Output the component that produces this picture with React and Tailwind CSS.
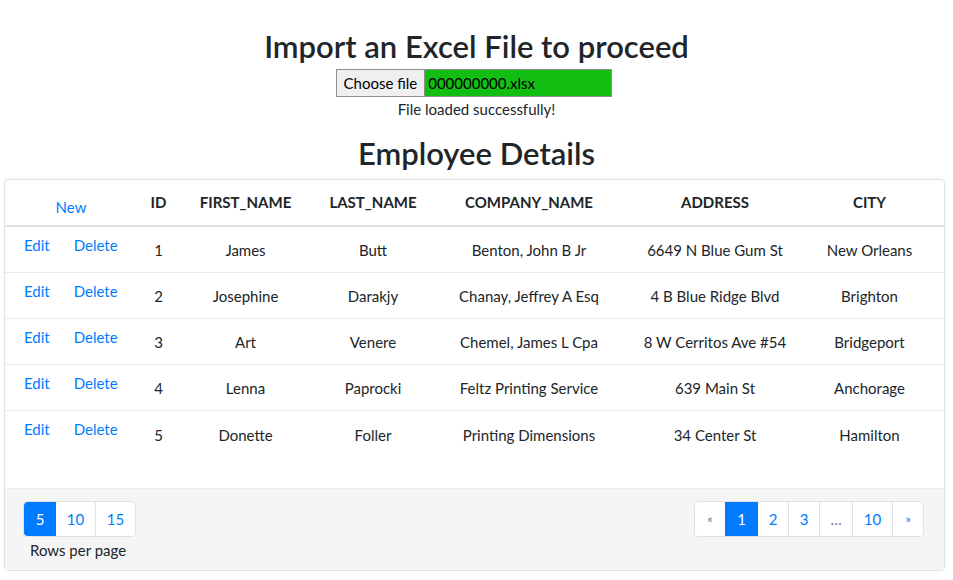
import React from 'react';

const rows = [
  { id: 1, first: 'James', last: 'Butt', company: 'Benton, John B Jr', address: '6649 N Blue Gum St', city: 'New Orleans' },
  { id: 2, first: 'Josephine', last: 'Darakjy', company: 'Chanay, Jeffrey A Esq', address: '4 B Blue Ridge Blvd', city: 'Brighton' },
  { id: 3, first: 'Art', last: 'Venere', company: 'Chemel, James L Cpa', address: '8 W Cerritos Ave #54', city: 'Bridgeport' },
  { id: 4, first: 'Lenna', last: 'Paprocki', company: 'Feltz Printing Service', address: '639 Main St', city: 'Anchorage' },
  { id: 5, first: 'Donette', last: 'Foller', company: 'Printing Dimensions', address: '34 Center St', city: 'Hamilton' },
];

const cols = [
  { label: 'ID', w: 'w-[43px]' },
  { label: 'FIRST_NAME', w: 'w-[131px]' },
  { label: 'LAST_NAME', w: 'w-[124px]' },
  { label: 'COMPANY_NAME', w: 'w-[188px]' },
  { label: 'ADDRESS', w: 'w-[184px]' },
  { label: 'CITY', w: 'flex-1 pr-[12px]' },
];

export default function App() {
  return (
    <div className="min-h-screen bg-white text-[#212529] font-['Lato','Open_Sans',sans-serif]">
      <div className="flex flex-col items-center pt-[27px]">
        <h2 className="text-[31px] font-semibold leading-[38px]">Import an Excel File to proceed</h2>
        <div className="mt-[4px] ml-[-6px] flex h-[28px] w-[276px] border border-[#8f8f8f]">
          <span className="flex items-center bg-[#efefef] px-[7px] text-[15px] text-black border-r border-[#8f8f8f]">Choose file</span>
          <span className="flex flex-1 items-center bg-[#11be11] px-[3px] text-[15px] text-black">000000000.xlsx</span>
        </div>
        <p className="mt-[1px] text-[15px] leading-[22px]">File loaded successfully!</p>
        <h2 className="mt-[13px] text-[31px] font-semibold leading-[40px]">Employee Details</h2>
      </div>

      <div className="mx-[4px] mt-[6px] w-[941px] rounded border border-[#dee2e6] shadow-[0_-1px_3px_rgba(0,0,0,0.05)]">
        <div className="flex h-[47px] items-center border-b-2 border-[#dee2e6] text-[15px] font-bold">
          <div className="w-[132px] pt-[10px] text-center font-normal text-[#007bff]">New</div>
          {cols.map(c => (
            <div key={c.label} className={`${c.w} text-center`}>{c.label}</div>
          ))}
        </div>
        {rows.map((r, i) => (
          <div key={r.id} className={`flex h-[46px] items-center pt-[2px] text-[15px] ${i < rows.length - 1 ? 'border-b border-[#e9ecef]' : ''}`}>
            <div className="flex w-[132px] gap-[24px] pb-[11px] pl-[19px] text-[#007bff]">
              <span>Edit</span>
              <span>Delete</span>
            </div>
            <div className="w-[43px] text-center">{r.id}</div>
            <div className="w-[131px] text-center">{r.first}</div>
            <div className="w-[124px] text-center">{r.last}</div>
            <div className="w-[188px] text-center">{r.company}</div>
            <div className="w-[184px] text-center">{r.address}</div>
            <div className="flex-1 pr-[12px] text-center">{r.city}</div>
          </div>
        ))}
        <div className="h-[31px]" />
        <div className="flex justify-between border-t border-[#e9ecef] bg-[#f5f5f5] px-[18px] pt-[12px] pb-[9px]">
          <div className="flex flex-col items-start">
            <div className="flex h-[36px] rounded border border-[#dee2e6] bg-white text-[15px] text-[#007bff]">
              <span className="flex w-[32px] items-center justify-center rounded-l bg-[#007bff] text-white">5</span>
              <span className="flex w-[40px] items-center justify-center border-r border-[#dee2e6]">10</span>
              <span className="flex w-[39px] items-center justify-center">15</span>
            </div>
            <span className="mt-[2px] pl-[7px] text-[15px] leading-[22px]">Rows per page</span>
          </div>
          <div className="mr-[2px] flex h-[36px] rounded border border-[#dee2e6] bg-white text-[15px] text-[#007bff]">
            <span className="flex w-[30px] items-center justify-center text-[12px] text-[#6c757d]">«</span>
            <span className="flex w-[33px] items-center justify-center bg-[#007bff] text-white">1</span>
            <span className="flex w-[31px] items-center justify-center border-r border-[#dee2e6]">2</span>
            <span className="flex w-[31px] items-center justify-center border-r border-[#dee2e6]">3</span>
            <span className="flex w-[33px] items-center justify-center border-r border-[#dee2e6] text-[#6c757d]">…</span>
            <span className="flex w-[40px] items-center justify-center border-r border-[#dee2e6]">10</span>
            <span className="flex w-[30px] items-center justify-center text-[12px]">»</span>
          </div>
        </div>
      </div>
    </div>
  );
}
